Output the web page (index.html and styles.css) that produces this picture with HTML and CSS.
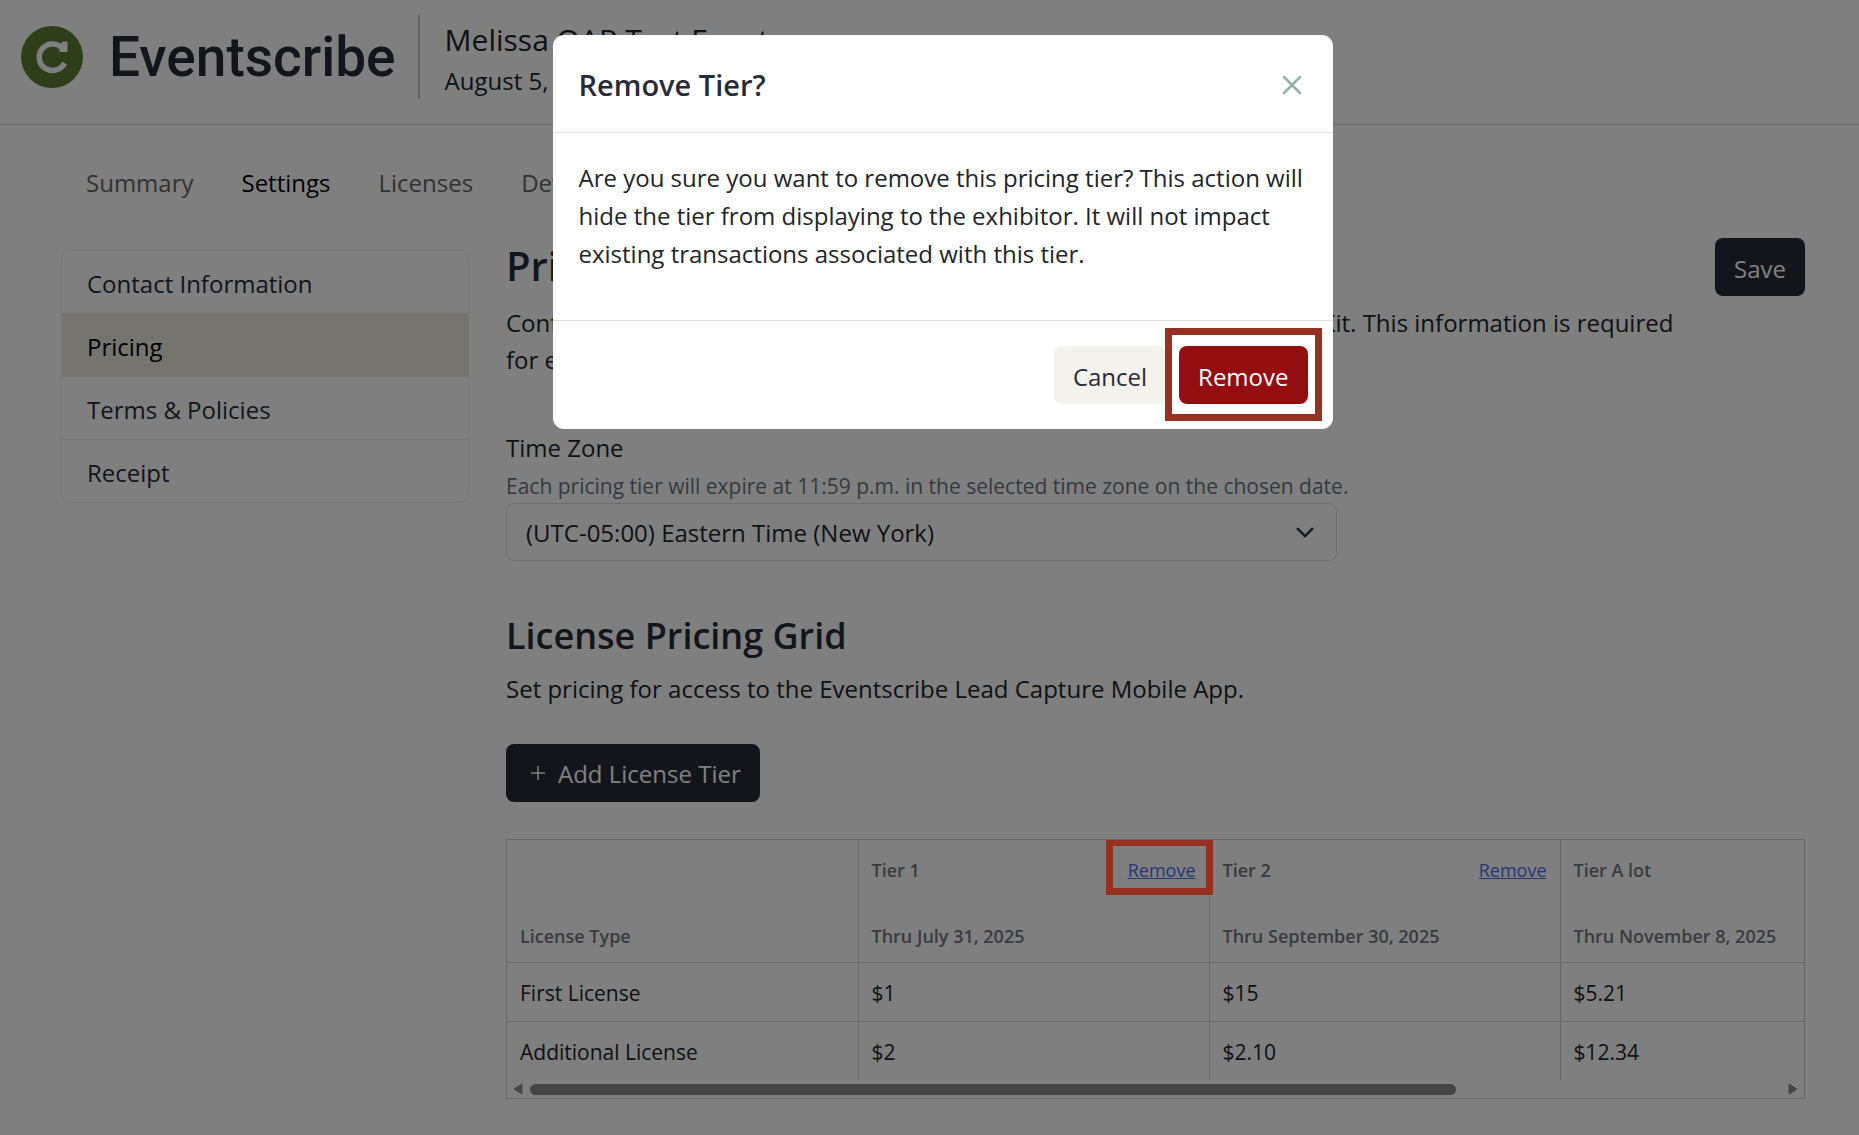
FILE: index.html
```html
<!DOCTYPE html>
<html lang="en">
<head>
  <meta charset="UTF-8" />
  <meta name="viewport" content="width=device-width, initial-scale=1.0" />
  <title>Eventscribe - Pricing</title>
  <link rel="stylesheet" href="styles.css">
</head>
<body>
  <header class="topbar">
    <a class="brand" href="#">
      <svg class="brand-mark" viewBox="0 0 62 62" aria-hidden="true">
        <circle cx="31" cy="31" r="31" fill="#5f7d34"/>
        <path d="M40 21A13.300 13.300 0 1 0 43.500 37" fill="none" stroke="#fff" stroke-width="5.500"/>
        <path d="M41.500 15.500h5V26h-8v-5z" fill="#fff"/>
      </svg>
      <span class="brand-name">Eventscribe</span>
    </a>
    <div class="event">
      <div class="event-name">Melissa OAR Test Event</div>
      <div class="event-date">August 5, 2025</div>
    </div>
  </header>

  <nav class="tabs">
    <a href="#">Summary</a>
    <a href="#" class="active">Settings</a>
    <a href="#">Licenses</a>
    <a href="#">Devices</a>
  </nav>

  <div class="layout">
    <nav class="side-menu">
      <a href="#">Contact Information</a>
      <a href="#" class="active">Pricing</a>
      <a href="#">Terms &amp; Policies</a>
      <a href="#">Receipt</a>
    </nav>

    <main class="content">
      <div class="content-head">
        <div class="intro">
          <h1>Pricing</h1>
          <p>Configure the pricing displayed to exhibitors in our Lead Capture Service Kit. This information is required for exhibitors to order.</p>
        </div>
        <button class="btn btn-dark" type="button">Save</button>
      </div>

      <div class="field">
        <label for="timeZone">Time Zone</label>
        <small id="timeZoneHelp">Each pricing tier will expire at 11:59 p.m. in the selected time zone on the chosen date.</small>
        <div class="select-wrap">
          <select id="timeZone" aria-describedby="timeZoneHelp">
            <option>(UTC-05:00) Eastern Time (New York)</option>
          </select>
          <svg class="chevron" viewBox="0 0 20 12" aria-hidden="true"><path d="M2 2l8 8 8-8"/></svg>
        </div>
      </div>

      <h2>License Pricing Grid</h2>
      <p>Set pricing for access to the Eventscribe Lead Capture Mobile App.</p>
      <button class="btn btn-dark btn-add" type="button">
        <svg viewBox="0 0 14 14" aria-hidden="true"><path d="M7 0v14M0 7h14"/></svg>
        Add License Tier
      </button>

      <div class="grid-box">
        <div class="grid-scroll">
          <table>
            <thead>
              <tr>
                <th>License Type</th>
                <th>
                  <div class="tier"><span>Tier 1</span><a href="#" class="marked">Remove</a></div>
                  Thru July 31, 2025
                </th>
                <th>
                  <div class="tier"><span>Tier 2</span><a href="#">Remove</a></div>
                  Thru September 30, 2025
                </th>
                <th>
                  <div class="tier"><span>Tier A lot</span></div>
                  Thru November 8, 2025
                </th>
              </tr>
            </thead>
            <tbody>
              <tr><td>First License</td><td>$1</td><td>$15</td><td>$5.21</td></tr>
              <tr><td>Additional License</td><td>$2</td><td>$2.10</td><td>$12.34</td></tr>
            </tbody>
          </table>
        </div>
        <div class="scrollbar" aria-hidden="true">
          <svg viewBox="0 0 10 12"><path d="M9 1v10L1 6z"/></svg>
          <div class="track"><div class="thumb"></div></div>
          <svg viewBox="0 0 10 12"><path d="M1 1v10l8-5z"/></svg>
        </div>
      </div>
    </main>
  </div>

  <div class="backdrop"></div>
  <div class="modal-wrap">
    <div class="modal" role="dialog" aria-modal="true" aria-labelledby="modalTitle">
      <div class="modal-header">
        <h3 id="modalTitle">Remove Tier?</h3>
        <button class="close" type="button" aria-label="Close">
          <svg viewBox="0 0 20 20" aria-hidden="true"><path d="M2 2l16 16M18 2L2 18"/></svg>
        </button>
      </div>
      <div class="modal-body">
        <p>Are you sure you want to remove this pricing tier? This action will hide the tier from displaying to the exhibitor. It will not impact existing transactions associated with this tier.</p>
      </div>
      <div class="modal-footer">
        <button class="btn btn-light" type="button">Cancel</button>
        <button class="btn btn-danger marked" type="button">Remove</button>
      </div>
    </div>
  </div>
</body>
</html>
```
FILE: styles.css
```css
* {
  box-sizing: border-box;
}
body {
  margin: 0;
  font-family: 'Segoe UI', 'Open Sans', sans-serif;
  font-size: 24px;
  line-height: 37px;
  color: #212529;
  background-color: #fff;
}
h1, h2, h3, p {
  margin: 0;
}
h1, h2, h3 {
  font-weight: 600;
  color: #282b37;
}
h1 {
  font-size: 40px;
  line-height: 56px;
}
h2 {
  font-size: 36px;
  line-height: 44px;
  margin: 53px 0 12px;
}
h3 {
  font-size: 29px;
}
a {
  color: inherit;
  text-decoration: none;
}

/* top bar */
.topbar {
  display: flex;
  align-items: flex-start;
  padding: 15px 21px 25px;
  border-bottom: 1px solid #d5d5d5;
}
.brand {
  display: flex;
  align-items: center;
  gap: 26px;
  height: 84px;
  padding-right: 22px;
  border-right: 2px solid #c4c4c4;
}
.brand-mark {
  width: 62px;
  height: 62px;
}
.brand-name {
  font-family: Roboto, sans-serif;
  font-size: 55px;
  font-weight: 500;
  color: #282b37;
}
.event {
  padding: 3px 0 0 25px;
}
.event-name {
  font-size: 30px;
  line-height: 44px;
}

/* tabs */
.tabs {
  display: flex;
  gap: 48px;
  padding: 39px 86px 37px;
  color: #666;
}
.tabs .active {
  color: #000;
}

.layout {
  display: flex;
  align-items: flex-start;
  gap: 37px;
  padding: 0 54px 0 61px;
}
.side-menu {
  flex: 0 0 408px;
  margin-top: 12px;
  border: 1px solid #f0efeb;
  border-radius: 9px;
  color: #282b37;
}
.side-menu a {
  display: block;
  padding: 14px 25px 11px;
}
.side-menu a + a {
  border-top: 1px solid #f0efeb;
}
.side-menu .active {
  background-color: #eae8dd;
  color: #000;
}
.content {
  flex: 1;
  min-width: 0;
}
.content-head {
  display: flex;
  align-items: flex-start;
  justify-content: space-between;
  gap: 26px;
}
.intro p {
  margin-top: 10px;
}

/* buttons */
.btn {
  flex: none;
  height: 58px;
  padding: 2px 19px 0;
  border: none;
  border-radius: 8px;
  font: inherit;
  cursor: pointer;
}
.btn-dark {
  background-color: #282b37;
  color: #fff;
}
.btn-light {
  background-color: #f3f2ec;
  color: #282b37;
}
.btn-danger {
  background-color: #930d11;
  color: #fff;
}
.btn-add {
  display: flex;
  align-items: center;
  gap: 13px;
  padding: 0 19px 0 25px;
  margin: 37px 0;
}
.btn-add svg {
  width: 14px;
  height: 14px;
  stroke: #fff;
  stroke-width: 1.5;
}

/* time zone field */
.field {
  max-width: 831px;
  margin-top: 51px;
}
.field label,
.field small {
  display: block;
}
.field small {
  padding-top: 4px;
  font-size: 21px;
  line-height: 33px;
  white-space: nowrap;
  color: #6c757d;
}
.select-wrap {
  position: relative;
}
.select-wrap select {
  width: 100%;
  height: 58px;
  padding: 0 19px;
  border: 1px solid #dcdcdc;
  border-radius: 8px;
  font: inherit;
  color: inherit;
  background: #fff;
  appearance: none;
}
.chevron {
  position: absolute;
  right: 23px;
  top: 24px;
  width: 18px;
  height: 11px;
  fill: none;
  stroke: #343a40;
  stroke-width: 3;
  stroke-linecap: round;
  stroke-linejoin: round;
  pointer-events: none;
}

/* pricing grid */
.grid-box {
  border: 1px solid #cfd0d4;
}
.grid-scroll {
  overflow: hidden;
}
table {
  width: 1404px;
  table-layout: fixed;
  border-collapse: collapse;
}
th, td {
  padding: 0 13px;
  text-align: left;
}
th + th, td + td {
  border-left: 1px solid #cfd0d4;
}
th {
  height: 122px;
  padding-bottom: 12px;
  font-size: 18px;
  line-height: 28px;
  font-weight: 600;
  color: #74767f;
  vertical-align: bottom;
}
td {
  height: 59px;
  padding-top: 4px;
  font-size: 21px;
  border-top: 1px solid #cfd0d4;
}
.tier {
  display: flex;
  justify-content: space-between;
  margin-bottom: 38px;
}
.tier a {
  font-weight: 400;
  color: #4b6ef5;
  text-decoration: underline;
}
.scrollbar {
  display: flex;
  align-items: center;
  gap: 7px;
  height: 18px;
  padding: 0 6px;
}
.scrollbar svg {
  flex: none;
  width: 10px;
  height: 12px;
  fill: #8b8b8b;
  stroke: #8b8b8b;
  stroke-linejoin: round;
}
.track {
  flex: 1;
}
.thumb {
  width: 74%;
  height: 11px;
  border-radius: 6px;
  background-color: #8b8b8b;
}

/* dialog */
.backdrop {
  position: fixed;
  inset: 0;
  background-color: rgba(0, 0, 0, 0.5);
}
.modal-wrap {
  position: fixed;
  inset: 0;
  display: flex;
  justify-content: center;
  align-items: flex-start;
  padding: 35px 0 0 26px;
}
.modal {
  width: 780px;
  border-radius: 11px;
  background-color: #fff;
}
.modal-header {
  display: flex;
  align-items: center;
  justify-content: space-between;
  height: 98px;
  padding: 2px 26px 0;
  border-bottom: 1px solid #dee2e6;
}
.close {
  padding: 5px;
  border: none;
  background: none;
  line-height: 0;
  cursor: pointer;
}
.close svg {
  width: 20px;
  height: 20px;
  stroke: #8fb5a5;
  stroke-width: 2.5;
  stroke-linecap: round;
}
.modal-body {
  padding: 26px 26px 47px;
  line-height: 38px;
}
.modal-footer {
  display: flex;
  justify-content: flex-end;
  gap: 13px;
  padding: 25px;
  border-top: 1px solid #dee2e6;
}

/* red frame round the items that need attention */
.marked {
  position: relative;
}
.marked::after {
  content: '';
  position: absolute;
  inset: -18px -14px -17px;
  border: 7px solid #943121;
  z-index: 1;
  pointer-events: none;
}
.tier .marked::after {
  inset: -17px -17px -11px -22px;
}
```
